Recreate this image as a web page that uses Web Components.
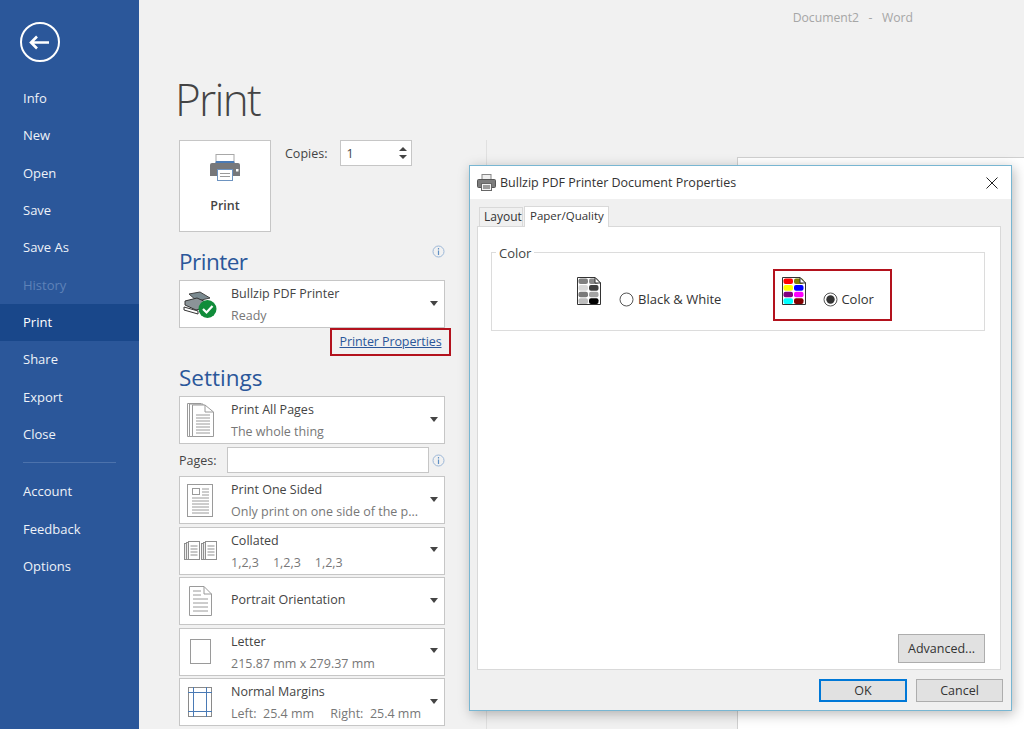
<!DOCTYPE html>
<html lang="en">
<head>
<meta charset="utf-8">
<title>Print</title>
<style>
  html, body { margin: 0; height: 100%; overflow: hidden; background: #f1f1f1; }
  body { font-family: "Open Sans", "Liberation Sans", sans-serif; }
</style>
</head>
<body>
<word-backstage>
  <nav-rail slot="rail"></nav-rail>
  <print-panel slot="panel"></print-panel>
  <print-dialog slot="over"></print-dialog>
</word-backstage>

<script>
const FONT = '"Open Sans", "Liberation Sans", sans-serif';

// page frame: rail on the left, panel and preview on the right
class WordBackstage extends HTMLElement {
  constructor() {
    super();
    this.attachShadow({ mode: 'open' }).innerHTML = `
      <style>
        :host { display: flex; width: 1024px; height: 729px; overflow: hidden; position: relative; background: #f1f1f1; font-family: ${FONT}; }
        .main { flex: 1; display: flex; flex-direction: column; min-width: 0; }
        .title { height: 34px; padding: 9px 111px 0 0; box-sizing: border-box; text-align: right; font-size: 12.2px; line-height: 17px; color: #a6a6a6; white-space: pre; }
        .body { flex: 1; display: flex; min-height: 0; }
        .divider { width: 1px; margin: 106px 0 0 40px; background: #e0e0e0; }
        .sheet { flex: 1; margin: 123px 0 0 250px; background: #fff; border: 1px solid #d0d0d0; border-width: 1px 0 0 1px; }
      </style>
      <slot name="rail"></slot>
      <div class="main">
        <div class="title">Document2   -   Word</div>
        <div class="body">
          <slot name="panel"></slot>
          <div class="divider"></div>
          <div class="sheet"></div>
        </div>
      </div>
      <slot name="over"></slot>`;
  }
}

class NavRail extends HTMLElement {
  constructor() {
    super();
    const items = [['Info'], ['New'], ['Open'], ['Save'], ['Save As'], ['History', 'off'], ['Print', 'on'], ['Share'], ['Export'], ['Close']];
    const rows = list => list.map(([t, c]) => `<div class="item ${c || ''}">${t}</div>`).join('');
    this.attachShadow({ mode: 'open' }).innerHTML = `
      <style>
        :host { display: block; width: 139px; flex: none; height: 729px; background: #2b579a; color: #fff; }
        .back { display: block; margin: 22px 0 0 20px; }
        .list { margin-top: 18px; }
        .item { height: 37.33px; line-height: 36px; padding-left: 23px; font-size: 13px; color: #eef2f8; }
        .off { color: #5e82b8; }
        .on { background: #19478a; color: #fff; }
        hr { border: 0; height: 1px; background: #4c72ac; margin: 9px 23px 10px; }
      </style>
      <svg class="back" width="40" height="40" viewBox="0 0 40 40" fill="none" stroke="#fff">
        <circle cx="20" cy="20" r="19" stroke-width="2"/>
        <path d="M11 20.5H29M17 14.5L11 20.5L17 26.5" stroke-width="2.6"/>
      </svg>
      <div class="list">${rows(items)}</div>
      <hr>
      <div>${rows([['Account'], ['Feedback'], ['Options']])}</div>`;
  }
}

// one drop-down row of the settings column
class OptionBox extends HTMLElement {
  constructor() {
    super();
    this.attachShadow({ mode: 'open' }).innerHTML = `
      <style>
        :host { display: flex; box-sizing: border-box; width: 266px; height: 48px; flex: none; align-items: center; background: #fff; border: 1px solid #c6c6c6; color: #444; font-size: 12.5px; }
        .ico { width: 40px; flex: none; display: flex; justify-content: center; margin-right: 11px; }
        .txt { flex: 1; min-width: 0; margin-top: 2px; line-height: 22px; white-space: nowrap; }
        :host([single]) .txt { margin-top: -2px; }
        .sub { color: #777; display: block; white-space: pre; }
        .arrow { width: 0; height: 0; border: 4.5px solid transparent; border-top: 5px solid #444; border-bottom: 0; margin: -2px 6px 0 0; }
        ::slotted(svg) { display: block; }
      </style>
      <div class="ico"><slot name="icon"></slot></div>
      <div class="txt"><slot></slot><span class="sub"><slot name="sub"></slot></span></div>
      <div class="arrow"></div>`;
  }
}

class InfoDot extends HTMLElement {
  constructor() {
    super();
    this.attachShadow({ mode: 'open' }).innerHTML = `
      <style>:host { display: block; width: 13px; height: 13px; } svg { display: block; }</style>
      <svg width="13" height="13" viewBox="0 0 13 13" fill="none">
        <circle cx="6.5" cy="6.5" r="5.5" stroke="#9db8d8"/>
        <path d="M6.5 5.5V10M6.5 3V4.4" stroke="#5f8fc4" stroke-width="1.2"/>
      </svg>`;
  }
}

class PrintPanel extends HTMLElement {
  constructor() {
    super();
    this.attachShadow({ mode: 'open' }).innerHTML = `
      <style>
        :host { display: block; width: 307px; flex: none; padding-left: 40px; box-sizing: border-box; color: #444; }
        h1 { margin: 30px 0 0 -4px; font-size: 44px; line-height: 70px; font-weight: 300; letter-spacing: -1.7px; color: #444; }
        .top { display: flex; margin-top: 6px; height: 92px; }
        .go { box-sizing: border-box; width: 92px; height: 92px; background: #fff; border: 1px solid #c6c6c6; display: flex; flex-direction: column; align-items: center; font-size: 12.5px; font-weight: 600; color: #444; }
        .go svg { margin-top: 13px; }
        .go span { margin-top: 16px; }
        .copies { display: flex; align-items: flex-start; margin-left: 14px; font-size: 12.5px; }
        .copies span { line-height: 27px; }
        .num { box-sizing: border-box; width: 72px; height: 26px; margin-left: 13px; background: #fff; border: 1px solid #c6c6c6; display: flex; align-items: center; justify-content: space-between; padding: 0 4px 0 5px; }
        .spin { display: flex; flex-direction: column; gap: 4px; }
        .spin i { display: block; width: 0; height: 0; border: 4px solid transparent; }
        .spin i:first-child { border-top: 0; border-bottom: 4px solid #444; }
        .spin i:last-child { border-bottom: 0; border-top: 4px solid #444; }
        h2 { margin: 0; font-size: 22.5px; line-height: 32px; font-weight: 400; color: #2b579a; }
        .printer-head { display: flex; justify-content: space-between; margin-top: 14px; width: 266px; }
        .printer-head h2 { letter-spacing: -.5px; }
        .printer-head info-dot { transform: translateY(-1px); }
        .props { width: 266px; display: flex; justify-content: flex-end; }
        .props a { box-sizing: border-box; height: 28px; width: 121px; margin-right: -6px; border: 2px solid #b3121d; text-align: center; line-height: 23px; font-size: 12.5px; letter-spacing: -.1px; color: #2b579a; text-decoration: underline; white-space: nowrap; }
        .settings { margin-top: 6px; }
        .stack { display: flex; flex-direction: column; gap: 2.5px; }
        .pages { display: flex; align-items: center; height: 26px; width: 284px; font-size: 12.5px; margin-top: 3px; }
        .pages b { font-weight: 400; width: 48px; }
        .pages u { display: block; box-sizing: border-box; width: 202px; height: 26px; background: #fff; border: 1px solid #c6c6c6; }
        .pages info-dot { margin-left: 3px; }
      </style>
      <h1>Print</h1>
      <div class="top">
        <div class="go">
          <svg width="32" height="27" viewBox="0 0 32 27">
            <rect x="7" y="0.5" width="18" height="11" fill="#fff" stroke="#a8a8a8"/>
            <path d="M7 7H25L26 10H6Z" fill="#4a7ab5"/>
            <path d="M3 9H29A2 2 0 0 1 31 11V22H1V11A2 2 0 0 1 3 9Z" fill="#77787b"/>
            <rect x="27" y="15" width="2.5" height="2.5" fill="#fff"/>
            <rect x="8.5" y="15.5" width="15" height="11" fill="#fff" stroke="#6d93c0"/>
            <path d="M11 19.5H21M11 22.5H21" stroke="#9a9a9a"/>
          </svg>
          <span>Print</span>
        </div>
        <div class="copies"><span>Copies:</span>
          <div class="num">1<div class="spin"><i></i><i></i></div></div>
        </div>
      </div>
      <div class="printer-head"><h2>Printer</h2><info-dot></info-dot></div>
      <option-box style="margin-top:2px">
        <svg slot="icon" width="34" height="27" viewBox="0 0 34 27">
          <path d="M6 3L17 1L27 7L14 10Z" fill="#7a8a90" stroke="#444"/>
          <path d="M2 10L14 7L25 12V16L13 19L2 14Z" fill="#8b9498" stroke="#333"/>
          <path d="M1 16L15 20V23L1 19Z" fill="#fff" stroke="#333"/>
          <circle cx="24.5" cy="18" r="9" fill="#108c3a"/>
          <path d="M20 18L23.5 21.5L29.5 15" fill="none" stroke="#fff" stroke-width="2.2"/>
        </svg>
        Bullzip PDF Printer<span slot="sub">Ready</span>
      </option-box>
      <div class="props"><a>Printer Properties</a></div>
      <div class="settings"><h2>Settings</h2></div>
      <div class="stack" style="margin-top:2px">
        <option-box>
          <svg slot="icon" width="27" height="34" viewBox="0 0 27 34" fill="#fff" stroke="#9a9a9a">
            <path d="M0.5 0.5H14V33.5H0.5Z"/><path d="M2.5 1H16V33.5H2.5Z"/>
            <path d="M5.5 2H18L26.5 9V33.5H5.5Z"/>
            <path d="M18 2V9H26.5M9 12H23M9 15H23M9 18H23M9 21H23M9 24H23M9 27H23M9 30H23" fill="none"/>
          </svg>
          Print All Pages<span slot="sub">The whole thing</span>
        </option-box>
      </div>
      <div class="pages"><b>Pages:</b><u></u><info-dot></info-dot></div>
      <div class="stack" style="margin-top:3px">
        <option-box>
          <svg slot="icon" width="26" height="33" viewBox="0 0 26 33" fill="#fff" stroke="#9a9a9a">
            <rect x="0.5" y="0.5" width="25" height="32"/>
            <rect x="5.5" y="4.5" width="7" height="6"/>
            <path d="M15 5H22M15 8H22M15 11H22M5 14H22M5 17H22M5 20H22M5 23H22M5 26H22M5 29H22" fill="none"/>
          </svg>
          Print One Sided<span slot="sub">Only print on one side of the p...</span>
        </option-box>
        <option-box>
          <svg slot="icon" width="33" height="20" viewBox="0 0 33 20" fill="#ececec" stroke="#8f8f8f">
            <rect x="0.5" y="2.5" width="10" height="16"/><rect x="2.5" y="1.5" width="10" height="17"/>
            <rect x="4.5" y="0.5" width="11" height="18" fill="#fff"/>
            <path d="M6.5 5H13.5M6.5 8H13.5M6.5 11H13.5M6.5 14H13.5" fill="none"/>
            <rect x="17.5" y="2.5" width="10" height="16"/><rect x="19.5" y="1.5" width="10" height="17"/>
            <rect x="21.5" y="0.5" width="11" height="18" fill="#fff"/>
            <path d="M23.5 5H30.5M23.5 8H30.5M23.5 11H30.5M23.5 14H30.5" fill="none"/>
          </svg>
          Collated<span slot="sub" style="word-spacing:.25px">1,2,3    1,2,3    1,2,3</span>
        </option-box>
        <option-box single>
          <svg slot="icon" width="23" height="30" viewBox="0 0 23 30" fill="#fff" stroke="#9a9a9a">
            <path d="M0.5 0.5H15L22.5 8V29.5H0.5Z"/>
            <path d="M15 0.5V8H22.5M4 5H12M4 9H12M4 13H19M4 17H19M4 21H19M4 25H19" fill="none"/>
          </svg>
          Portrait Orientation
        </option-box>
        <option-box>
          <svg slot="icon" width="21" height="25" viewBox="0 0 21 25"><rect x="0.5" y="0.5" width="20" height="24" fill="#fff" stroke="#9a9a9a"/></svg>
          Letter<span slot="sub">215.87 mm x 279.37 mm</span>
        </option-box>
        <option-box>
          <svg slot="icon" width="24" height="30" viewBox="0 0 24 30" fill="#fff">
            <rect x="0.5" y="0.5" width="23" height="29" stroke="#8a8a8a"/>
            <path d="M5.5 0V30M18.5 0V30M0 5.5H24M0 24.5H24" fill="none" stroke="#4a7ab5"/>
          </svg>
          Normal Margins<span slot="sub">Left:  25.4 mm     Right:  25.4 mm</span>
        </option-box>
      </div>`;
  }
}

// small page icon with 2x4 swatches, as in the dialog
class SwatchPage extends HTMLElement {
  constructor() {
    super();
    const c = (this.getAttribute('colors') || '').split(',');
    const cells = c.map((f, i) => {
      const x = 1.5 + (i % 2) * 10.5, y = 1.5 + Math.floor(i / 2) * 6.6;
      return `<rect x="${x}" y="${y}" width="9.5" height="5.6" rx="2" fill="${f}"/>`;
    }).join('');
    this.attachShadow({ mode: 'open' }).innerHTML = `
      <style>:host { display: block; width: 24px; height: 28px; } svg { display: block; }</style>
      <svg width="24" height="28" viewBox="0 0 24 28">
        <path d="M0.5 0.5H18L23.5 6V27.5H0.5Z" fill="#fff" stroke="#333"/>
        ${cells}
        <path d="M18 0.5V6H23.5Z" fill="#fff" stroke="#333"/>
      </svg>`;
  }
}

class RadioOption extends HTMLElement {
  constructor() {
    super();
    const on = this.hasAttribute('checked');
    this.attachShadow({ mode: 'open' }).innerHTML = `
      <style>
        :host { display: flex; align-items: center; gap: 4px; font-size: 13px; color: #333; white-space: nowrap; }
        svg { display: block; }
      </style>
      <svg width="15" height="15" viewBox="0 0 15 15">
        <circle cx="7.5" cy="7.5" r="6.5" fill="#fff" stroke="#555"/>
        ${on ? '<circle cx="7.5" cy="7.5" r="4.2" fill="#333"/>' : ''}
      </svg>
      <slot></slot>`;
  }
}

class DlgButton extends HTMLElement {
  constructor() {
    super();
    this.attachShadow({ mode: 'open' }).innerHTML = `
      <style>
        :host { display: flex; align-items: center; justify-content: center; box-sizing: border-box; background: #e1e1e1; border: 1px solid #adadad; font-size: 12.5px; color: #333; }
        :host([default]) { border: 2px solid #0078d7; }
      </style>
      <slot></slot>`;
  }
}

class PrintDialog extends HTMLElement {
  constructor() {
    super();
    this.attachShadow({ mode: 'open' }).innerHTML = `
      <style>
        :host { position: absolute; left: 469px; top: 165px; width: 543px; height: 546px; box-sizing: border-box; display: flex; flex-direction: column; background: #f0f0f0; border: 1px solid #78b6d2; box-shadow: 2px 3px 12px rgba(0,0,0,.28); color: #333; font-size: 12.5px; }
        .cap { height: 33px; flex: none; background: #fff; display: flex; align-items: center; padding-left: 7px; gap: 4px; }
        .cap .t { flex: 1; color: #333; }
        .cap .x { margin-right: 13px; display: block; }
        .tabs { height: 27px; flex: none; display: flex; align-items: flex-end; padding-left: 9px; }
        .tab { box-sizing: border-box; height: 19px; width: 44px; padding-left: 4px; line-height: 18px; border: 1px solid #d9d9d9; border-bottom: 0; font-size: 12px; color: #333; white-space: nowrap; }
        .tab.on { height: 21px; width: 85px; background: #fff; margin-left: 1px; position: relative; top: 1px; line-height: 17px; padding-left: 5px; font-size: 11.5px; z-index: 1; }
        .page { flex: none; height: 444px; margin: 0 10px 0 7px; box-sizing: border-box; background: #fff; border: 1px solid #d9d9d9; padding: 25px 15px 6px 13px; display: flex; flex-direction: column; }
        .group { position: relative; box-sizing: border-box; height: 79px; flex: none; border: 1px solid #dcdcdc; display: flex; }
        .legend { position: absolute; left: 4px; top: -8px; background: #fff; padding: 0 3px; line-height: 16px; font-size: 13px; color: #444; }
        .mono { display: flex; margin: 24px 0 0 85px; align-items: flex-start; height: 32px; }
        .mono radio-option { margin: 13px 0 0 18px; }
        .mark { box-sizing: border-box; width: 119px; height: 52px; margin: 16px 0 0 52px; border: 2px solid #b3121d; padding: 6px 0 0 7px; display: flex; align-items: flex-start; }
        .mark radio-option { margin: 13px 0 0 17px; gap: 3px; }
        .adv { margin-top: auto; align-self: flex-end; width: 87px; height: 29px; }
        .foot { flex: 1; display: flex; justify-content: flex-end; gap: 9px; padding: 9px 8px 0 0; align-items: flex-start; }
        .foot dlg-button { width: 87px; height: 23px; }
        .foot dlg-button[default] { width: 88px; }
      </style>
      <div class="cap">
        <svg width="19" height="17" viewBox="0 0 19 17">
          <rect x="5" y="0.5" width="9" height="6" fill="#eee" stroke="#888"/>
          <rect x="0.5" y="5.5" width="18" height="8" rx="1" fill="#7c7c7c" stroke="#555"/>
          <rect x="4.5" y="9.5" width="10" height="7" fill="#f3f3f3" stroke="#666"/>
          <path d="M6 12H13M6 14H13" stroke="#444"/>
        </svg>
        <div class="t">Bullzip PDF Printer Document Properties</div>
        <svg class="x" width="12" height="12" viewBox="0 0 12 12" fill="none" stroke="#222"><path d="M0.5 0.5L11.5 11.5M11.5 0.5L0.5 11.5"/></svg>
      </div>
      <div class="tabs"><div class="tab">Layout</div><div class="tab on">Paper/Quality</div></div>
      <div class="page">
        <div class="group">
          <div class="legend">Color</div>
          <div class="mono">
            <swatch-page colors="#808080,#8a8a8a,#d8d8d8,#404040,#7a7a7a,#a4a4a4,#bdbdbd,#000"></swatch-page>
            <radio-option>Black &amp; White</radio-option>
          </div>
          <div class="mark">
            <swatch-page colors="#f00,#808000,#ff0,#00f,#800080,#f0f,#0ff,#800000"></swatch-page>
            <radio-option checked>Color</radio-option>
          </div>
        </div>
        <dlg-button class="adv">Advanced...</dlg-button>
      </div>
      <div class="foot"><dlg-button default>OK</dlg-button><dlg-button>Cancel</dlg-button></div>`;
  }
}

customElements.define('word-backstage', WordBackstage);
customElements.define('nav-rail', NavRail);
customElements.define('option-box', OptionBox);
customElements.define('info-dot', InfoDot);
customElements.define('print-panel', PrintPanel);
customElements.define('swatch-page', SwatchPage);
customElements.define('radio-option', RadioOption);
customElements.define('dlg-button', DlgButton);
customElements.define('print-dialog', PrintDialog);
</script>
</body>
</html>
